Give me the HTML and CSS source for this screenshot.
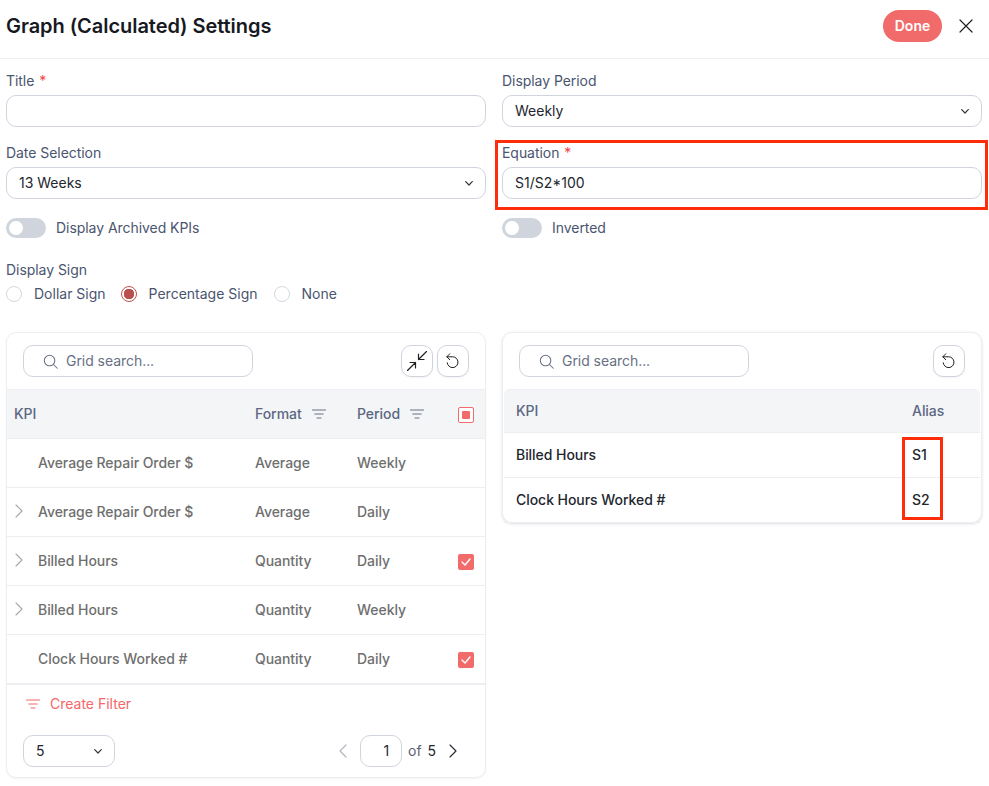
FILE: index.html
```html
<!DOCTYPE html>
<html lang="en">
<head>
<meta charset="utf-8">
<title>Graph (Calculated) Settings</title>
<link rel="stylesheet" href="styles.css">
</head>
<body>
<svg class="sprite" width="0" height="0" aria-hidden="true">
  <symbol id="chev-down" viewBox="0 0 8 5"><path d="M.7.7L4 4l3.300-3.300" fill="none" stroke="currentColor" stroke-width="1.200" stroke-linecap="round" stroke-linejoin="round"/></symbol>
  <symbol id="search" viewBox="0 0 16 16"><circle cx="7" cy="7" r="5.600" fill="none" stroke="currentColor" stroke-width="1.100"/><path d="M11.200 11.200l4 4" fill="none" stroke="currentColor" stroke-width="1.100" stroke-linecap="round"/></symbol>
  <symbol id="reset" viewBox="0 0 16 16"><path d="M2 3.800H7.500a5.400 5.400 0 1 1-5.300 6" fill="none" stroke="currentColor" stroke-width="1" stroke-linecap="round"/><path d="M4.800.8L1.800 3.800l3 3" fill="none" stroke="currentColor" stroke-width="1" stroke-linecap="round" stroke-linejoin="round"/></symbol>
  <symbol id="filter" viewBox="0 0 14 10"><path d="M.5 1h13M2.800 5h8.400M5 9h4" fill="none" stroke="currentColor" stroke-width="1.100" stroke-linecap="round"/></symbol>
  <symbol id="chev-right" viewBox="0 0 8 14"><path d="M1 1l6 6-6 6" fill="none" stroke="currentColor" stroke-width="1.100" stroke-linecap="round" stroke-linejoin="round"/></symbol>
  <symbol id="chev-left" viewBox="0 0 8 14"><path d="M7 1L1 7l6 6" fill="none" stroke="currentColor" stroke-width="1.300" stroke-linecap="round" stroke-linejoin="round"/></symbol>
  <symbol id="check" viewBox="0 0 10 8"><path d="M1 4l3 3 5-6" fill="none" stroke="#fff" stroke-width="1.400" stroke-linecap="round" stroke-linejoin="round"/></symbol>
</svg>

<div class="modal">
  <header class="modal-head">
    <h1 class="modal-title">Graph (Calculated) Settings</h1>
    <div class="modal-actions">
      <button class="btn-done" type="button">Done</button>
      <button class="btn-close" type="button" aria-label="Close">
        <svg width="14" height="14" viewBox="0 0 14 14"><path d="M1 1l12 12M13 1L1 13" fill="none" stroke="#222" stroke-width="1.200" stroke-linecap="round"/></svg>
      </button>
    </div>
  </header>

  <section class="form">
    <div class="field">
      <div class="label">Title <span class="req">*</span></div>
      <div class="control"></div>
    </div>
    <div class="field">
      <div class="label">Display Period</div>
      <div class="control select"><span>Weekly</span><svg class="chev" width="8" height="5"><use href="#chev-down"/></svg></div>
    </div>
    <div class="field">
      <div class="label">Date Selection</div>
      <div class="control select"><span>13 Weeks</span><svg class="chev" width="8" height="5"><use href="#chev-down"/></svg></div>
    </div>
    <div class="field field-marked">
      <div class="label">Equation <span class="req">*</span></div>
      <div class="control"><span>S1/S2*100</span></div>
      <div class="mark mark-equation"></div>
    </div>
    <div class="switch-row"><span class="switch"><span class="knob"></span></span><span class="label">Display Archived KPIs</span></div>
    <div class="switch-row"><span class="switch"><span class="knob"></span></span><span class="label">Inverted</span></div>
  </section>

  <section class="sign">
    <div class="label">Display Sign</div>
    <div class="radios">
      <span class="radio"></span><span class="radio-text r1">Dollar Sign</span>
      <span class="radio on"></span><span class="radio-text r2">Percentage Sign</span>
      <span class="radio"></span><span class="radio-text">None</span>
    </div>
  </section>

  <section class="panels">
    <div class="panel">
      <div class="toolbar">
        <div class="search"><svg class="search-icon" width="15" height="15"><use href="#search"/></svg><span>Grid search...</span></div>
        <div class="tools">
          <button class="tool" type="button" aria-label="Collapse">
            <svg width="20" height="20" viewBox="0 0 20 20"><path d="M19.500.5l-8 8M11.500 3v5.500H17M.5 19.500l8-8M3 11.500h5.500V17" fill="none" stroke="#222" stroke-width="1.200" stroke-linecap="round" stroke-linejoin="round"/></svg>
          </button>
          <button class="tool" type="button" aria-label="Reset"><svg width="16" height="16"><use href="#reset"/></svg></button>
        </div>
      </div>
      <div class="row row-head">
        <div class="c-kpi">KPI</div>
        <div class="c-format">Format<svg class="filter" width="14" height="10"><use href="#filter"/></svg></div>
        <div class="c-period">Period<svg class="filter" width="14" height="10"><use href="#filter"/></svg></div>
        <div class="c-check"><span class="cb cb-mixed"><span></span></span></div>
      </div>
      <div class="row">
        <div class="c-kpi"><span class="exp"></span>Average Repair Order $</div>
        <div class="c-format">Average</div><div class="c-period">Weekly</div><div class="c-check"></div>
      </div>
      <div class="row">
        <div class="c-kpi"><span class="exp"><svg width="8" height="14"><use href="#chev-right"/></svg></span>Average Repair Order $</div>
        <div class="c-format">Average</div><div class="c-period">Daily</div><div class="c-check"></div>
      </div>
      <div class="row">
        <div class="c-kpi"><span class="exp"><svg width="8" height="14"><use href="#chev-right"/></svg></span>Billed Hours</div>
        <div class="c-format">Quantity</div><div class="c-period">Daily</div>
        <div class="c-check"><span class="cb cb-on"><svg width="10" height="8"><use href="#check"/></svg></span></div>
      </div>
      <div class="row">
        <div class="c-kpi"><span class="exp"><svg width="8" height="14"><use href="#chev-right"/></svg></span>Billed Hours</div>
        <div class="c-format">Quantity</div><div class="c-period">Weekly</div><div class="c-check"></div>
      </div>
      <div class="row row-last">
        <div class="c-kpi"><span class="exp"></span>Clock Hours Worked #</div>
        <div class="c-format">Quantity</div><div class="c-period">Daily</div>
        <div class="c-check"><span class="cb cb-on"><svg width="10" height="8"><use href="#check"/></svg></span></div>
      </div>
      <div class="create-filter"><svg width="14" height="10"><use href="#filter"/></svg><span>Create Filter</span></div>
      <div class="pager">
        <div class="page-size"><span>5</span><svg class="chev" width="8" height="5"><use href="#chev-down"/></svg></div>
        <div class="pages">
          <svg class="pg-prev" width="8" height="14"><use href="#chev-left"/></svg>
          <div class="page-input">1</div>
          <span class="of">of</span><span class="total">5</span>
          <svg class="pg-next" width="8" height="14"><use href="#chev-right"/></svg>
        </div>
      </div>
    </div>

    <div class="panel panel-right">
      <div class="toolbar">
        <div class="search"><svg class="search-icon" width="15" height="15"><use href="#search"/></svg><span>Grid search...</span></div>
        <div class="tools">
          <button class="tool" type="button" aria-label="Reset"><svg width="16" height="16"><use href="#reset"/></svg></button>
        </div>
      </div>
      <div class="alias-table">
        <div class="alias-row alias-head"><div>KPI</div><div class="alias-col">Alias</div></div>
        <div class="alias-row"><div>Billed Hours</div><div class="alias-col">S1</div></div>
        <div class="alias-row"><div>Clock Hours Worked #</div><div class="alias-col">S2</div></div>
        <div class="mark mark-alias"></div>
      </div>
    </div>
  </section>
</div>
</body>
</html>
```
FILE: styles.css
```css
* { box-sizing: border-box; }
html, body { margin: 0; padding: 0; }
body {
  width: 989px;
  height: 786px;
  overflow: hidden;
  background: #fff;
  color: #1f2430;
  font: 400 14px/20px Inter, "Liberation Sans", sans-serif;
  letter-spacing: -0.05px;
}
.sprite { position: absolute; }
svg { display: block; flex: none; }

.modal-head {
  height: 59px;
  padding: 0 16px 7px 6px;
  display: flex;
  align-items: center;
  justify-content: space-between;
  border-bottom: 1px solid #eeeff2;
}
.modal-title {
  margin: 0;
  font-size: 20px;
  line-height: 28px;
  font-weight: 600;
  color: #17191f;
}
.modal-actions { display: flex; align-items: center; gap: 17px; }
.btn-done {
  width: 59px;
  height: 32px;
  border: 0;
  border-radius: 16px;
  background: #f26b6b;
  color: #fff;
  font: 600 14px/20px Inter, "Liberation Sans", sans-serif;
  padding: 0;
}
.btn-close {
  width: 14px;
  height: 14px;
  padding: 0;
  border: 0;
  background: none;
}

.form {
  display: grid;
  grid-template-columns: 480px 480px;
  column-gap: 16px;
  row-gap: 16px;
  padding: 12px 0 0 6px;
}
.label { color: #4a556f; font-size: 14px; line-height: 20px; }
.req { color: #ef4444; margin-left: 1px; }
.field { position: relative; }
.control {
  margin-top: 4px;
  height: 32px;
  border: 1px solid #d0d4de;
  border-radius: 10px;
  padding: 0 12px;
  display: flex;
  align-items: center;
  justify-content: space-between;
  color: #23262e;
  letter-spacing: 0;
}
.chev { color: #30343e; }
.mark {
  position: absolute;
  border: 3px solid #ff2d0a;
  pointer-events: none;
}
.mark-equation { left: -7px; top: -3px; width: 493px; height: 70px; }

.switch-row {
  display: flex;
  align-items: center;
  gap: 10px;
  height: 20px;
  margin-top: 3px;
}
.switch {
  width: 40px;
  height: 20px;
  border-radius: 10px;
  background: #d0d5dd;
  padding: 3px;
  display: block;
}
.knob {
  display: block;
  width: 14px;
  height: 14px;
  border-radius: 50%;
  background: #fff;
}

.sign { padding: 22px 0 0 6px; }
.radios {
  display: flex;
  align-items: center;
  height: 20px;
  margin-top: 4px;
  color: #4a556f;
  letter-spacing: 0;
}
.radio {
  width: 16px;
  height: 16px;
  border-radius: 50%;
  border: 1px solid #d5d8e0;
  margin-right: 12px;
  flex: none;
}
.radio.on {
  border-color: #c0504f;
  background: radial-gradient(circle, #b9504f 0 5px, #fff 5.500px);
}
.r1 { margin-right: 15px; }
.r2 { margin-right: 16px; }

.panels {
  display: flex;
  gap: 16px;
  align-items: flex-start;
  padding: 28px 0 0 6px;
}
.panel {
  width: 480px;
  height: 446px;
  border: 1px solid #eceef1;
  border-radius: 10px;
  box-shadow: 0 1px 2px rgba(16, 24, 40, .05);
  background: #fff;
}
.panel-right { height: 191px; box-shadow: 0 1px 3px rgba(16, 24, 40, .14); }
.toolbar {
  height: 57px;
  padding: 12px 16px;
  display: flex;
  justify-content: space-between;
  border-bottom: 1px solid #eceef1;
}
.panel-right .toolbar { height: 56px; border-bottom: 0; }
.search {
  width: 230px;
  height: 32px;
  border: 1px solid #d0d4de;
  border-radius: 10px;
  padding: 0 0 0 19px;
  display: flex;
  align-items: center;
  gap: 8px;
  color: #667085;
}
.search-icon { color: #667085; }
.tools { display: flex; gap: 4px; }
.tool {
  width: 32px;
  height: 32px;
  padding: 0;
  border: 1px solid #d0d4de;
  border-radius: 10px;
  background: #fff;
  color: #222;
  display: flex;
  align-items: center;
  justify-content: center;
  box-shadow: 0 1px 2px rgba(16, 24, 40, .05);
}

.row {
  height: 49px;
  display: flex;
  align-items: center;
  border-bottom: 1px solid #eceef1;
  color: #6f6f6f;
  font-weight: 500;
}
.row-head {
  background: #f4f5f7;
  color: #5c6782;
}
.row-last { height: 50px; border-bottom-width: 2px; }
.c-kpi { width: 248px; padding-left: 7px; display: flex; align-items: center; }
.exp { width: 24px; display: block; color: #a8a8a8; padding-left: 1px; margin-top: -3px; }
.c-format { width: 102px; display: flex; align-items: center; gap: 10px; }
.c-period { width: 101px; display: flex; align-items: center; gap: 10px; }
.filter { color: #667085; }
.c-check { width: 16px; margin-top: 2px; }
.cb {
  width: 16px;
  height: 16px;
  border-radius: 2px;
  display: flex;
  align-items: center;
  justify-content: center;
}
.cb-mixed { border: 1px solid #f26b6b; background: #fff; }
.cb-mixed span { display: block; width: 8px; height: 8px; background: #f26b6b; border-radius: 1px; }
.cb-on { background: #f26b6b; }

.create-filter {
  display: flex;
  align-items: center;
  gap: 10px;
  height: 20px;
  margin: 9px 0 0 19px;
  color: #f4666a;
  letter-spacing: 0;
}
.pager {
  margin-top: 21px;
  padding: 0 28px 0 16px;
  display: flex;
  align-items: center;
  justify-content: space-between;
}
.page-size {
  width: 92px;
  height: 32px;
  border: 1px solid #d0d4de;
  border-radius: 10px;
  padding: 0 12px;
  display: flex;
  align-items: center;
  justify-content: space-between;
  color: #23262e;
}
.pages { display: flex; align-items: center; }
.pg-prev { color: #b5b8bf; margin-right: 13px; }
.page-input {
  width: 42px;
  height: 32px;
  border: 1px solid #d0d4de;
  border-radius: 10px;
  padding-right: 12px;
  display: flex;
  align-items: center;
  justify-content: flex-end;
  color: #23262e;
}
.of { margin-left: 6px; color: #5c6270; }
.total { margin-left: 6px; color: #23262e; }
.pg-next { color: #23262e; margin-left: 13px; }

.alias-table { position: relative; margin: 0 1px; }
.alias-row {
  height: 45px;
  padding: 0 12px;
  display: flex;
  align-items: center;
  justify-content: space-between;
  border-bottom: 1px solid #eceef1;
  color: #23262e;
  font-weight: 500;
}
.alias-row:last-of-type { border-bottom: 0; }
.alias-head {
  height: 44px;
  background: #f4f5f7;
  color: #5c6782;
  border-top: 1px solid #eceef1;
  border-radius: 6px 6px 0 0;
}
.alias-col { width: 56px; }
.mark-alias { left: 398px; top: 48px; width: 41px; height: 83px; }
```
